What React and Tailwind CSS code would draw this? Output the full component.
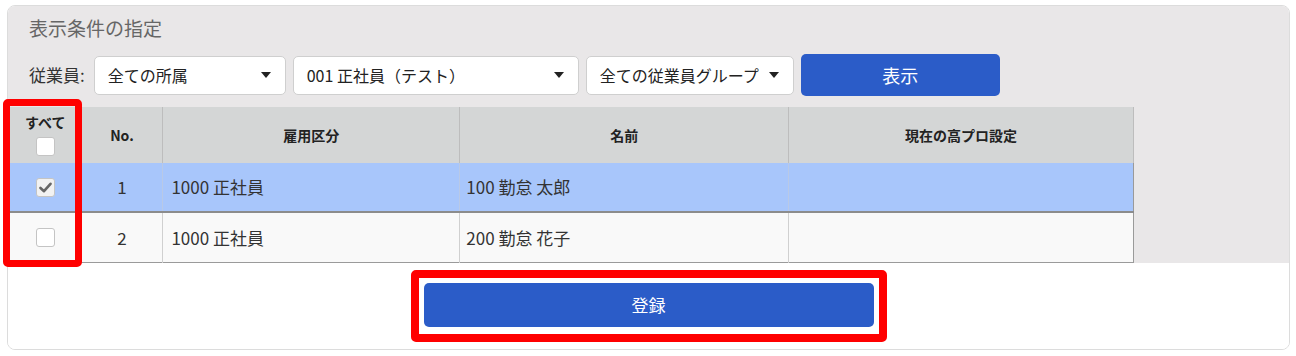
import React from 'react';

// 高プロ設定 一括登録パネル
const Caret = () => (
  <svg width="10" height="6" viewBox="0 0 10 6" className="shrink-0">
    <path d="M0 0 L10 0 L5 6 Z" fill="#222" />
  </svg>
);

const FakeSelect = ({ label, className }) => (
  <div className={`flex items-center justify-between h-[39px] bg-white border border-[#cfcfcf] rounded-[5px] pl-[13px] pr-[14px] text-[16px] text-[#222] ${className}`}>
    <span className="whitespace-nowrap">{label}</span>
    <Caret />
  </div>
);

const CheckBox = ({ checked }) => (
  <span className={`inline-flex items-center justify-center w-[19px] h-[19px] rounded-[3px] border border-[#c4c4c4] ${checked ? 'bg-[#f2f2f2]' : 'bg-white'}`}>
    {checked && (
      <svg width="13" height="11" viewBox="0 0 13 11">
        <path d="M1.5 6 L5 9.2 L11.5 1.8" fill="none" stroke="#666" strokeWidth="2.6" strokeLinecap="round" strokeLinejoin="round" />
      </svg>
    )}
  </span>
);

const rows = [
  { no: 1, kubun: '1000 正社員', name: '100 勤怠 太郎', checked: true },
  { no: 2, kubun: '1000 正社員', name: '200 勤怠 花子', checked: false },
];

export default function App() {
  return (
    <div className="w-[1296px] h-[356px] bg-white pt-[5px] pl-[7px] pr-[6px]" style={{ fontFamily: '"Noto Sans CJK JP", "Noto Sans", sans-serif' }}>
      <div className="relative w-full h-[345px] border border-[#dcdcdc] rounded-[8px] flex flex-col">
        {/* 上部: 検索条件 + 一覧 */}
        <div className="bg-[#e9e7e8] pt-[8px] rounded-t-[7px]">
          <div className="pl-[21px] text-[19px] leading-[28px] text-[#666]">表示条件の指定</div>
          <div className="flex items-center gap-[7px] pl-[21px] mt-[12px] h-[42px]">
            <span className="text-[17px] text-[#333] mr-[2px] whitespace-nowrap">従業員:</span>
            <FakeSelect label="全ての所属" className="w-[192px]" />
            <FakeSelect label="001 正社員（テスト）" className="w-[286px]" />
            <FakeSelect label="全ての従業員グループ" className="w-[208px]" />
            <button className="w-[199px] h-[42px] rounded-[5px] bg-[#2b5cc8] text-white text-[18px]">表示</button>
          </div>

          <table className="mt-[11px] ml-[2px] border-collapse text-[#333]" style={{ width: 1124 }}>
            <colgroup>
              <col style={{ width: 71 }} />
              <col style={{ width: 82 }} />
              <col style={{ width: 297 }} />
              <col style={{ width: 329 }} />
              <col style={{ width: 345 }} />
            </colgroup>
            <thead>
              <tr className="bg-[#d4d6d6] h-[56px] text-[14px] font-bold text-[#222]">
                <th className="align-top pt-[5px] font-bold">
                  <div className="leading-[20px]">すべて</div>
                  <div className="mt-[5px] flex justify-center"><CheckBox /></div>
                </th>
                <th className="border-l border-[#bdbdbd] font-bold">No.</th>
                <th className="border-l border-[#bdbdbd] font-bold">雇用区分</th>
                <th className="border-l border-[#bdbdbd] font-bold">名前</th>
                <th className="border-l border-r border-[#bdbdbd] font-bold">現在の高プロ設定</th>
              </tr>
            </thead>
            <tbody className="text-[17px]">
              {rows.map((r) => (
                <tr
                  key={r.no}
                  className={r.checked ? 'bg-[#a8c6fb] h-[49px] border-b-2 border-[#8c8c8c]' : 'bg-[#f9f9f9] h-[50px] border-b border-[#9a9a9a]'}
                >
                  <td className="text-center align-middle"><div className="flex justify-center"><CheckBox checked={r.checked} /></div></td>
                  <td className={`text-center border-l ${r.checked ? 'border-[#b9c9e6]' : 'border-[#d0d0d0]'}`}>{r.no}</td>
                  <td className={`pl-[8px] border-l ${r.checked ? 'border-[#b9c9e6]' : 'border-[#d0d0d0]'}`}>{r.kubun}</td>
                  <td className={`pl-[6px] border-l ${r.checked ? 'border-[#b9c9e6]' : 'border-[#d0d0d0]'}`}>{r.name}</td>
                  <td className={`border-l border-r ${r.checked ? 'border-l-[#b9c9e6] border-r-[#9a9a9a]' : 'border-l-[#d0d0d0] border-r-[#9a9a9a]'}`}></td>
                </tr>
              ))}
            </tbody>
          </table>
        </div>

        {/* 下部: 登録ボタン */}
        <div className="flex-1 bg-white rounded-b-[7px] flex justify-center pt-[7px]">
          <div className="border-[8px] border-[#ff0000] rounded-[5px] p-[5px] h-[72px]">
            <button className="block w-[450px] h-[44px] rounded-[5px] bg-[#2b5cc8] text-white text-[17px]">登録</button>
          </div>
        </div>

        {/* 注釈: チェック列の赤枠 */}
        <div className="absolute left-[-5px] top-[93px] w-[79px] h-[168px] border-[7px] border-[#ff0000] rounded-[5px] pointer-events-none" />
      </div>
    </div>
  );
}
